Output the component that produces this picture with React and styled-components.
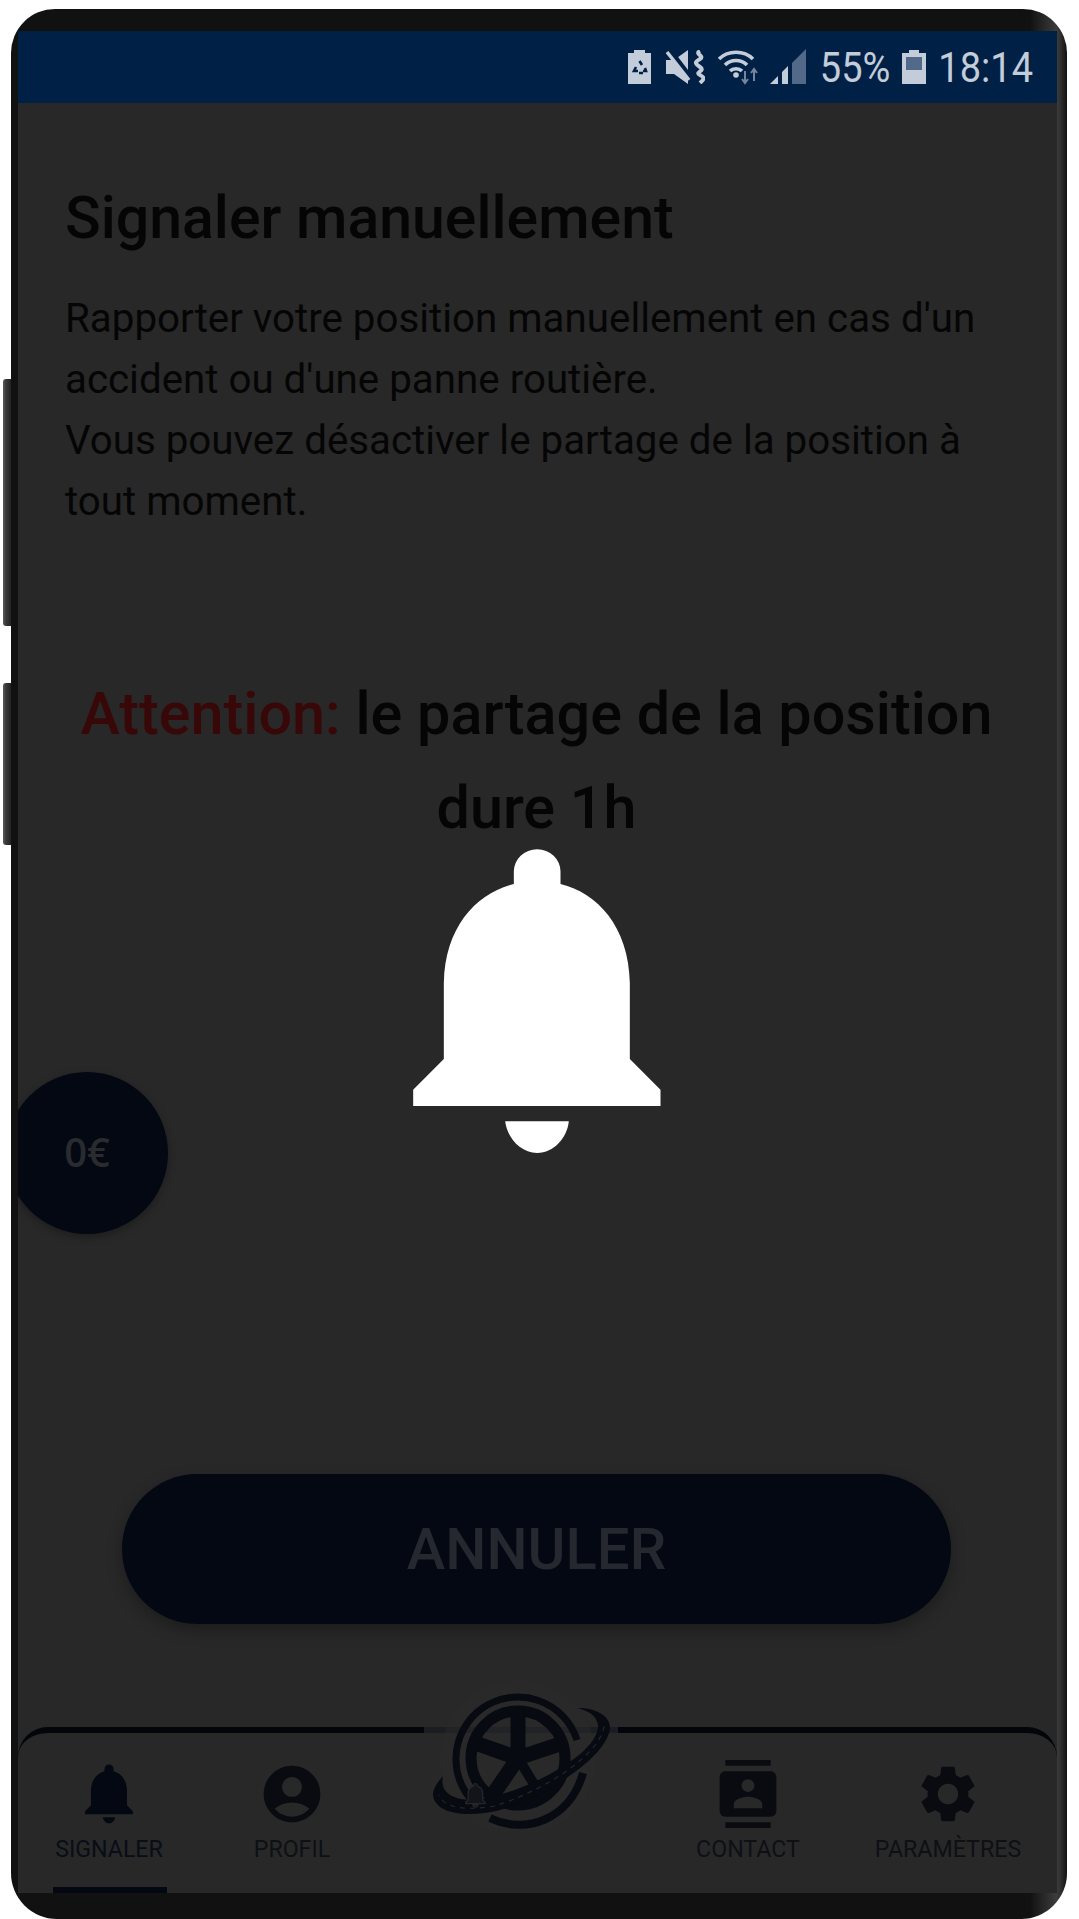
import React from 'react';
import styled, { createGlobalStyle } from 'styled-components';
import { MdAccountCircle, MdContacts, MdSettings } from 'react-icons/md';

const GlobalStyle = createGlobalStyle`
  html, body {
    margin: 0;
    height: 1919px;
    overflow: hidden;
    background: #fff;
    font-family: Roboto, "Liberation Sans", sans-serif;
  }
`;

const Phone = styled.div`
  position: relative;
  box-sizing: border-box;
  width: 1056px;
  height: 1910px;
  margin: 9px 0 0 11px;
  padding: 22px 10px 26px 7px;
  background: linear-gradient(90deg, #111 0, #111 96.5%, #3c3c3c 99%, #333 99.3%, #111 100%);
  border-radius: 44px 44px 46px 46px;
`;

const SideButton = styled.div`
  position: absolute;
  left: -8px;
  top: ${(p) => p.$top}px;
  width: 8px;
  height: ${(p) => p.$height}px;
  background: linear-gradient(90deg, #5a5a5a, #3a3a3a 35%, #222);
  border-radius: 3px 0 0 3px;
`;

const Screen = styled.div`
  position: relative;
  display: flex;
  flex-direction: column;
  height: 100%;
  overflow: hidden;
  background: #282828;
`;

const StatusBar = styled.div`
  display: flex;
  flex: none;
  align-items: center;
  justify-content: flex-end;
  height: 72px;
  padding-right: 24px;
  background: #012045;
  color: #c3ccd9;
`;

const StatusIcon = styled.svg`
  display: block;
  flex: none;
  margin-left: ${(p) => p.$gap}px;
`;

const StatusText = styled.span`
  margin-left: ${(p) => p.$gap}px;
  font-size: 38px;
  line-height: 44px;
  transform: scaleY(1.14);
`;

const Content = styled.main`
  display: flex;
  flex: 1;
  flex-direction: column;
  padding: 85px 47px 0;
`;

const Title = styled.h1`
  margin: 0;
  color: #050505;
  font-size: 59px;
  font-weight: 500;
  line-height: 60px;
`;

const Description = styled.p`
  margin: 40px 0 0;
  color: #050505;
  font-size: 40.3px;
  line-height: 61px;
`;

const Warning = styled.p`
  margin: 135px 0 0;
  padding-right: 2px;
  color: #050505;
  font-size: 59.3px;
  font-weight: 500;
  line-height: 94px;
  text-align: center;
`;

const WarningLabel = styled.span`
  color: #380808;
`;

const Balance = styled.div`
  position: absolute;
  left: -12px;
  top: 1041px;
  display: flex;
  align-items: center;
  justify-content: center;
  width: 162px;
  height: 162px;
  padding-bottom: 4px;
  box-sizing: border-box;
  border-radius: 50%;
  background: #030812;
  box-shadow: 0 3px 8px rgba(0, 0, 0, 0.3);
  color: #2a2b2e;
  font-family: "Open Sans", sans-serif;
  font-size: 40px;
  font-weight: 600;
`;

const CancelButton = styled.button`
  display: block;
  width: 829px;
  height: 150px;
  margin: auto 0 103px 57px;
  padding: 0;
  border: 0;
  border-radius: 75px;
  background: #030812;
  box-shadow: 0 6px 16px rgba(0, 0, 0, 0.3);
  color: #25282e;
  font-family: Roboto, sans-serif;
  font-size: 58px;
  font-weight: 500;
`;

const Overlay = styled.div`
  position: absolute;
  left: 0;
  right: 2px;
  top: 818px;
  display: flex;
  justify-content: center;
`;

const Nav = styled.nav`
  position: relative;
  display: grid;
  flex: none;
  grid-template-columns: 182px 184px 256px 216px 184px;
  box-sizing: border-box;
  height: 166px;
  border-top: 6px solid #020509;
  border-radius: 30px 30px 0 0;
`;

const LineGap = styled.div`
  position: absolute;
  left: 406px;
  top: -6px;
  width: 194px;
  height: 6px;
  background: #1a1d22;
`;

const NavItem = styled.div`
  position: relative;
  display: flex;
  flex-direction: column;
  align-items: center;
  padding-top: 27px;
  color: ${(p) => p.$color};
`;

const NavLabel = styled.span`
  margin-top: 7px;
  color: ${(p) => (p.$active ? '#090d16' : '#0e1014')};
  font-size: 23.2px;
  line-height: 28px;
`;

const Indicator = styled.div`
  position: absolute;
  bottom: 0;
  left: 35px;
  width: 114px;
  height: 6px;
  background: #030812;
`;

const Logo = styled.svg`
  position: absolute;
  left: 402px;
  top: -73px;
`;

const BELL_PATH =
  'M370 163V125a70 66 0 0 1 140 0V163C620 190 715 290 718 460V688L810 780V829H68V780L160 688V460C163 290 260 190 370 163ZM344 875H535C530 925 490 970 440 970C390 970 350 925 344 875Z';

function Bell({ width, height, color }) {
  return (
    <svg width={width} height={height} viewBox='68 58 743 912' fill={color}>
      <path d={BELL_PATH} />
    </svg>
  );
}

const BatterySaverIcon = () => (
  <StatusIcon $gap={0} width='23' height='34' viewBox='0 0 23 34'>
    <path d='M6 0h11v3h6v31H0V3h6z' fill='#c3ccd9' />
    <path
      d='M11.5 11l2.5 4M8 17l-2 4h4M15 23h-4M17 18l1 3h-3'
      stroke='#012045'
      strokeWidth='2.6'
      fill='none'
    />
  </StatusIcon>
);

const MuteIcon = () => (
  <StatusIcon $gap={15} width='39' height='34' viewBox='0 0 39 34'>
    <path d='M0 10h8L22 0v34L8 24H0z' fill='#c3ccd9' />
    <path d='M3 0l26 34' stroke='#012045' strokeWidth='6' />
    <path d='M1 2l22 28' stroke='#c3ccd9' strokeWidth='3.5' />
    <path
      d='M34 1c-6 3 5 5 0 8s-6 4 0 8-6 5 0 8 3 5 0 8'
      stroke='#c3ccd9'
      strokeWidth='4'
      fill='none'
    />
  </StatusIcon>
);

const WifiIcon = () => (
  <StatusIcon $gap={13} width='40' height='36' viewBox='0 0 40 36'>
    <g stroke='#c3ccd9' strokeWidth='3.6' fill='none'>
      <path d='M1 10c9-9 25-9 34 0' />
      <path d='M7 16c6-6 16-6 22 0' />
      <path d='M12 22c3-3 9-3 12 0' />
    </g>
    <circle cx='18' cy='26' r='2.8' fill='#c3ccd9' />
    <path
      d='M27 22v11M24 30l3 4 3-4M36 32V20M33 24l3-4 3 4'
      stroke='#74859c'
      strokeWidth='2'
      fill='none'
    />
  </StatusIcon>
);

const SignalIcon = () => (
  <StatusIcon $gap={12} width='36' height='36' viewBox='0 0 36 36'>
    <path d='M0 35l8-8v8zM12 35V23l6-6v18z' fill='#c3ccd9' />
    <path d='M22 35V14L36 0v35z' fill='#53698a' />
  </StatusIcon>
);

const BatteryIcon = () => (
  <StatusIcon $gap={12} width='24' height='34' viewBox='0 0 24 34'>
    <path d='M7 0h10v3h7v31H0V3h7z' fill='#c3ccd9' />
    <rect x='4' y='7' width='16' height='13' fill='#53698a' />
  </StatusIcon>
);

const WheelLogo = () => (
  <Logo width='220' height='170' viewBox='0 0 220 170'>
    <circle cx='98' cy='98' r='78' fill='#2a2a2a' opacity='0.5' />
    <g fill='none' stroke='#070a11'>
      <path d='M157 80A62 62 0 1 0 60 148' strokeWidth='7' />
      <path d='M70 158C105 175 150 160 163 113' strokeWidth='8' />
      <circle cx='98' cy='98' r='47' strokeWidth='11' />
      <g strokeWidth='15'>
        <path d='M98 98V54' />
        <path d='M98 98L58 84' />
        <path d='M98 98L140 84' />
        <path d='M98 98L72 136' />
        <path d='M98 98L120 134' strokeWidth='10' />
      </g>
    </g>
    <path
      d='M158 48C175 48 190 55 190 68C188 95 130 135 80 150C50 158 15 155 13 135C13 128 18 122 23 116C20 130 28 140 55 140C100 135 180 95 178 65C176 55 170 52 158 48Z'
      fill='#070a11'
    />
    <path
      d='M184 66C180 95 125 130 75 146C50 150 25 150 19 135'
      fill='none'
      stroke='#23262b'
      strokeWidth='1.2'
      strokeDasharray='5 5'
    />
    <g transform='translate(44 122) scale(0.026)' stroke='#23262b' strokeWidth='50' fill='#121419'>
      <path d={BELL_PATH} />
    </g>
  </Logo>
);

export default function App() {
  return (
    <>
      <GlobalStyle />
      <Phone>
        <SideButton $top={370} $height={247} />
        <SideButton $top={674} $height={162} />
        <Screen>
          <StatusBar>
            <BatterySaverIcon />
            <MuteIcon />
            <WifiIcon />
            <SignalIcon />
            <StatusText $gap={14}>55%</StatusText>
            <BatteryIcon />
            <StatusText $gap={12}>18:14</StatusText>
          </StatusBar>
          <Content>
            <Title>Signaler manuellement</Title>
            <Description>
              Rapporter votre position manuellement en cas d'un
              <br />
              accident ou d'une panne routière.
              <br />
              Vous pouvez désactiver le partage de la position à
              <br />
              tout moment.
            </Description>
            <Warning>
              <WarningLabel>Attention:</WarningLabel> le partage de la position
              <br />
              dure 1h
            </Warning>
            <CancelButton>ANNULER</CancelButton>
          </Content>
          <Nav>
            <LineGap />
            <NavItem $color='#030812'>
              <Bell width={48} height={68} color='#030812' />
              <NavLabel $active>SIGNALER</NavLabel>
              <Indicator />
            </NavItem>
            <NavItem $color='#090b10'>
              <MdAccountCircle size={68} />
              <NavLabel>PROFIL</NavLabel>
            </NavItem>
            <div />
            <NavItem $color='#090b10'>
              <MdContacts size={68} />
              <NavLabel>CONTACT</NavLabel>
            </NavItem>
            <NavItem $color='#090b10'>
              <MdSettings size={68} />
              <NavLabel>PARAMÈTRES</NavLabel>
            </NavItem>
            <WheelLogo />
          </Nav>
          <Balance>0€</Balance>
          <Overlay>
            <Bell width={248} height={304} color='#fff' />
          </Overlay>
        </Screen>
      </Phone>
    </>
  );
}
